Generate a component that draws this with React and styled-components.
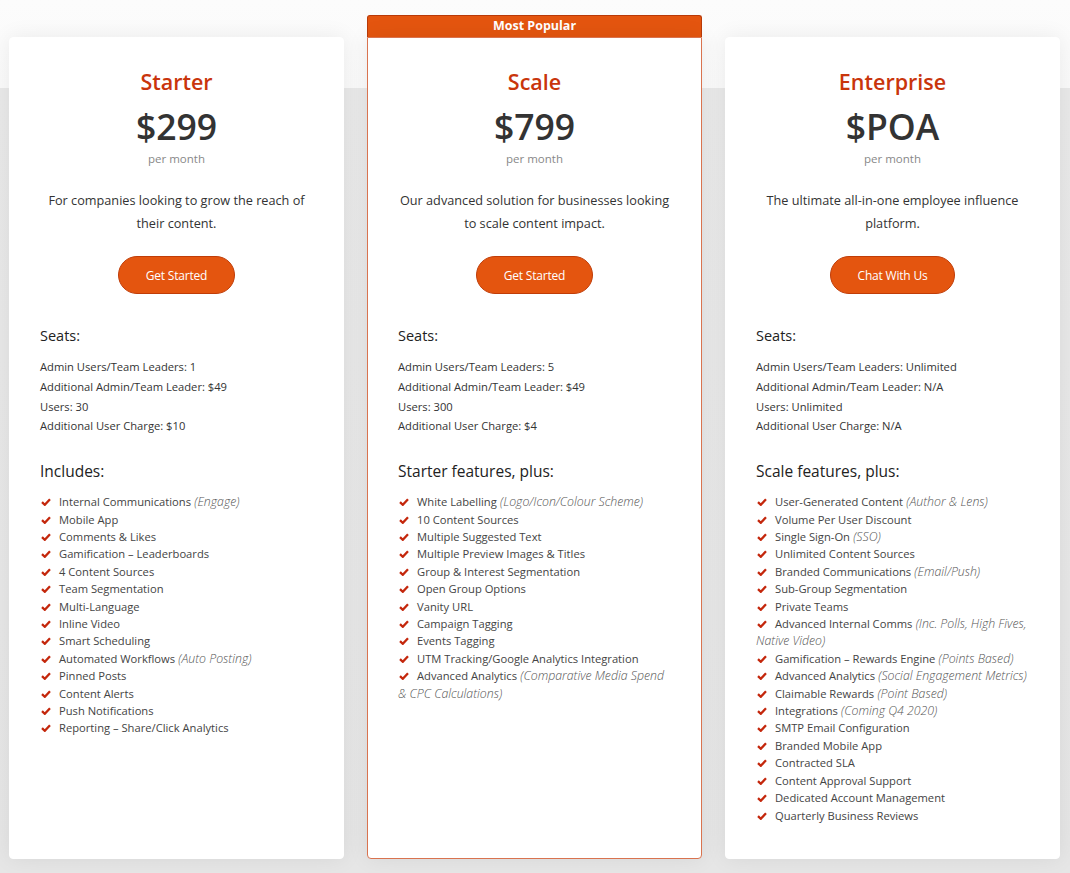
import React from "react";
import styled, { createGlobalStyle } from "styled-components";

const GlobalStyle = createGlobalStyle`
  body {
    margin: 0;
    font-family: "Open Sans", "Liberation Sans", sans-serif;
    background: #fbfbfb;
  }
`;

const plans = [
  {
    name: "Starter",
    price: "$299",
    desc: "For companies looking to grow the reach of their content.",
    cta: "Get Started",
    seats: [
      "Admin Users/Team Leaders: 1",
      "Additional Admin/Team Leader: $49",
      "Users: 30",
      "Additional User Charge: $10",
    ],
    heading: "Includes:",
    features: [
      ["Internal Communications", "(Engage)"],
      ["Mobile App"],
      ["Comments & Likes"],
      ["Gamification – Leaderboards"],
      ["4 Content Sources"],
      ["Team Segmentation"],
      ["Multi-Language"],
      ["Inline Video"],
      ["Smart Scheduling"],
      ["Automated Workflows", "(Auto Posting)"],
      ["Pinned Posts"],
      ["Content Alerts"],
      ["Push Notifications"],
      ["Reporting – Share/Click Analytics"],
    ],
  },
  {
    name: "Scale",
    price: "$799",
    popular: true,
    desc: "Our advanced solution for businesses looking to scale content impact.",
    cta: "Get Started",
    seats: [
      "Admin Users/Team Leaders: 5",
      "Additional Admin/Team Leader: $49",
      "Users: 300",
      "Additional User Charge: $4",
    ],
    heading: "Starter features, plus:",
    features: [
      ["White Labelling", "(Logo/Icon/Colour Scheme)"],
      ["10 Content Sources"],
      ["Multiple Suggested Text"],
      ["Multiple Preview Images & Titles"],
      ["Group & Interest Segmentation"],
      ["Open Group Options"],
      ["Vanity URL"],
      ["Campaign Tagging"],
      ["Events Tagging"],
      ["UTM Tracking/Google Analytics Integration"],
      ["Advanced Analytics", "(Comparative Media Spend & CPC Calculations)"],
    ],
  },
  {
    name: "Enterprise",
    price: "$POA",
    desc: "The ultimate all-in-one employee influence platform.",
    cta: "Chat With Us",
    seats: [
      "Admin Users/Team Leaders: Unlimited",
      "Additional Admin/Team Leader: N/A",
      "Users: Unlimited",
      "Additional User Charge: N/A",
    ],
    heading: "Scale features, plus:",
    features: [
      ["User-Generated Content", "(Author & Lens)"],
      ["Volume Per User Discount"],
      ["Single Sign-On", "(SSO)"],
      ["Unlimited Content Sources"],
      ["Branded Communications", "(Email/Push)"],
      ["Sub-Group Segmentation"],
      ["Private Teams"],
      ["Advanced Internal Comms", "(Inc. Polls, High Fives, Native Video)"],
      ["Gamification – Rewards Engine", "(Points Based)"],
      ["Advanced Analytics", "(Social Engagement Metrics)"],
      ["Claimable Rewards", "(Point Based)"],
      ["Integrations", "(Coming Q4 2020)"],
      ["SMTP Email Configuration"],
      ["Branded Mobile App"],
      ["Contracted SLA"],
      ["Content Approval Support"],
      ["Dedicated Account Management"],
      ["Quarterly Business Reviews"],
    ],
  },
];

function Check() {
  return (
    <CheckIcon viewBox="0 0 10 8">
      <path d="M1 4.2 L3.8 6.8 L9 1.2" fill="none" stroke="#c4270c" strokeWidth="2.3" />
    </CheckIcon>
  );
}

function PlanColumn({ plan }) {
  return (
    <Column>
      {plan.popular ? <Banner>Most Popular</Banner> : <BannerSpace />}
      <Card $popular={plan.popular}>
        <Header>
          <PlanName>{plan.name}</PlanName>
          <Price>{plan.price}</Price>
          <Period>per month</Period>
          <Description>{plan.desc}</Description>
          <Button>{plan.cta}</Button>
        </Header>
        <SectionTitle>Seats:</SectionTitle>
        <SeatList>
          {plan.seats.map((s) => (
            <li key={s}>{s}</li>
          ))}
        </SeatList>
        <FeatureTitle>{plan.heading}</FeatureTitle>
        <FeatureList>
          {plan.features.map(([text, note]) => (
            <li key={text}>
              <Check />
              {text}
              {note && <Note> {note}</Note>}
            </li>
          ))}
        </FeatureList>
      </Card>
    </Column>
  );
}

export default function App() {
  return (
    <>
      <GlobalStyle />
      <Page>
        <Row>
          {plans.map((p) => (
            <PlanColumn key={p.name} plan={p} />
          ))}
        </Row>
      </Page>
    </>
  );
}

const Page = styled.div`
  height: 873px;
  background: linear-gradient(#fcfcfc 0, #fafafa 88px, #e9e9e9 88px, #e6e6e6 100%);
  padding: 15px 10px 0 9px;
  box-sizing: border-box;
  overflow: hidden;
`;

const Row = styled.div`
  display: flex;
  gap: 23px;
  align-items: flex-start;
`;

const Column = styled.div`
  width: 335px;
  display: flex;
  flex-direction: column;
`;

const Banner = styled.div`
  height: 22px;
  box-sizing: border-box;
  background: #e4550f;
  border: 1px solid #b93a08;
  border-bottom: none;
  border-radius: 3px 3px 0 0;
  color: #fff;
  font-weight: 700;
  font-size: 12.5px;
  line-height: 20px;
  text-align: center;
`;

const BannerSpace = styled.div`
  height: 22px;
`;

const Card = styled.div`
  flex: none;
  height: 822px;
  box-sizing: border-box;
  background: #fff;
  border: 1px solid ${(p) => (p.$popular ? "#d9734f" : "#fff")};
  border-radius: ${(p) => (p.$popular ? "0 0 4px 4px" : "4px")};
  box-shadow: 0 0 22px rgba(0, 0, 0, 0.07);
  padding: 29px 30px 30px 30px;
  color: #444;
`;

const Header = styled.div`
  display: flex;
  flex-direction: column;
  align-items: center;
  text-align: center;
`;

const PlanName = styled.h2`
  margin: 0;
  font-size: 21.5px;
  line-height: 30px;
  font-weight: 600;
  color: #c9350c;
`;

const Price = styled.div`
  margin-top: 7px;
  font-size: 35.5px;
  line-height: 44px;
  font-weight: 600;
  color: #333;
`;

const Period = styled.div`
  margin-top: 2px;
  font-size: 11.5px;
  line-height: 18px;
  color: #888;
`;

const Description = styled.p`
  margin: 21px 0 0;
  font-size: 12.7px;
  line-height: 23px;
  color: #333;
`;

const Button = styled.button`
  margin-top: 21px;
  height: 38px;
  padding: 0 27px;
  border-radius: 19px;
  border: 1px solid #c03d08;
  background: #e4550f;
  color: #fff;
  font-family: inherit;
  font-size: 12px;
  font-weight: 500;
  letter-spacing: -0.2px;
  cursor: pointer;
`;

const SectionTitle = styled.h3`
  margin: 31px 0 0;
  font-size: 14.5px;
  line-height: 22px;
  font-weight: 400;
  color: #222;
`;

const SeatList = styled.ul`
  list-style: none;
  margin: 10px 0 0;
  padding: 0;
  font-size: 11.2px;
  line-height: 19.8px;
  color: #333;
`;

const FeatureTitle = styled.h3`
  margin: 24px 0 0;
  font-size: 15.5px;
  line-height: 22px;
  font-weight: 400;
  color: #222;
`;

const FeatureList = styled.ul`
  list-style: none;
  margin: 11px 0 0;
  padding: 0;
  font-size: 11.2px;
  line-height: 17.4px;
  color: #444;
`;

const CheckIcon = styled.svg`
  width: 10px;
  height: 8px;
  margin: 0 8px 0 1px;
  vertical-align: 0px;
`;

const Note = styled.em`
  font-size: 12.3px;
  line-height: 17px;
  font-weight: 300;
  color: #555;
`;
